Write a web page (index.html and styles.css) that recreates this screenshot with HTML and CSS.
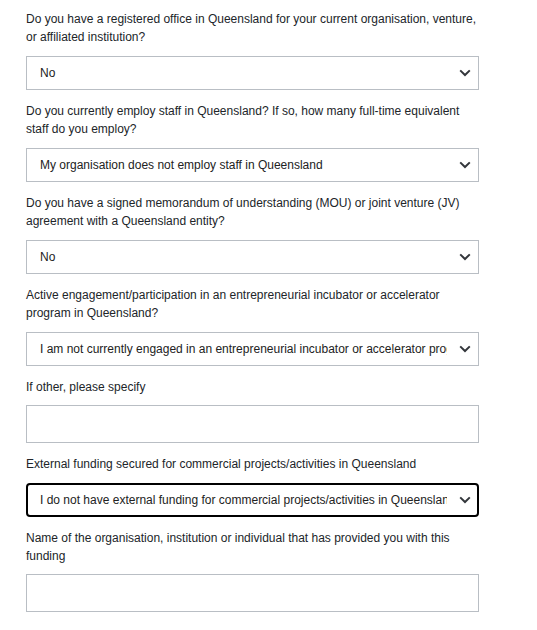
FILE: index.html
```html
<!DOCTYPE html>
<html lang="en">
<head>
<meta charset="utf-8">
<title>Form</title>
<link rel="stylesheet" href="styles.css">
</head>
<body>
<form class="form">
  <div class="field">
    <label class="label">Do you have a registered office in Queensland for your current organisation, venture, or affiliated institution?</label>
    <div class="select">
      <span class="select-text">No</span>
      <svg class="chev" width="12" height="8" viewBox="0 0 12 8"><path d="M1.2 1.4 L6 6 L10.8 1.4" fill="none" stroke="#33363b" stroke-width="2"/></svg>
    </div>
  </div>
  <div class="field">
    <label class="label">Do you currently employ staff in Queensland? If so, how many full-time equivalent staff do you employ?</label>
    <div class="select">
      <span class="select-text">My organisation does not employ staff in Queensland</span>
      <svg class="chev" width="12" height="8" viewBox="0 0 12 8"><path d="M1.2 1.4 L6 6 L10.8 1.4" fill="none" stroke="#33363b" stroke-width="2"/></svg>
    </div>
  </div>
  <div class="field">
    <label class="label">Do you have a signed memorandum of understanding (MOU) or joint venture (JV) agreement with a Queensland entity?</label>
    <div class="select">
      <span class="select-text">No</span>
      <svg class="chev" width="12" height="8" viewBox="0 0 12 8"><path d="M1.2 1.4 L6 6 L10.8 1.4" fill="none" stroke="#33363b" stroke-width="2"/></svg>
    </div>
  </div>
  <div class="field">
    <label class="label">Active engagement/participation in an entrepreneurial incubator or accelerator program in Queensland?</label>
    <div class="select">
      <span class="select-text">I am not currently engaged in an entrepreneurial incubator or accelerator program in Queensland</span>
      <svg class="chev" width="12" height="8" viewBox="0 0 12 8"><path d="M1.2 1.4 L6 6 L10.8 1.4" fill="none" stroke="#33363b" stroke-width="2"/></svg>
    </div>
  </div>
  <div class="field field-input">
    <label class="label">If other, please specify</label>
    <div class="input"></div>
  </div>
  <div class="field">
    <label class="label">External funding secured for commercial projects/activities in Queensland</label>
    <div class="select focused">
      <span class="select-text">I do not have external funding for commercial projects/activities in Queensland</span>
      <svg class="chev" width="12" height="8" viewBox="0 0 12 8"><path d="M1.2 1.4 L6 6 L10.8 1.4" fill="none" stroke="#33363b" stroke-width="2"/></svg>
    </div>
  </div>
  <div class="field field-input">
    <label class="label">Name of the organisation, institution or individual that has provided you with this funding</label>
    <div class="input"></div>
  </div>
</form>
</body>
</html>
```
FILE: styles.css
```css
html, body {
  margin: 0;
  padding: 0;
  background: #ffffff;
}
body {
  font-family: "Liberation Sans", Arial, sans-serif;
  font-size: 12px;
  color: #212529;
}
.form {
  width: 453px;
  padding: 10px 0 0 26px;
  display: flex;
  flex-direction: column;
  gap: 12px;
}
.field {
  display: flex;
  flex-direction: column;
  gap: 10px;
}
.field-input {
  gap: 9px;
}
.label {
  display: block;
  line-height: 18px;
  padding-right: 2px;
}
.select {
  box-sizing: border-box;
  height: 34px;
  border: 1px solid #b9bec4;
  display: flex;
  align-items: center;
  padding: 0 7px 0 13px;
  color: #222;
  background: #fff;
}
.select.focused {
  border: 2px solid #000;
  border-radius: 4px;
  padding-left: 12px;
  padding-right: 6px;
}
.select-text {
  flex: 1;
  min-width: 0;
  overflow: hidden;
  white-space: nowrap;
  margin-right: 12px;
}
.chev {
  flex: none;
  display: block;
}
.input {
  box-sizing: border-box;
  height: 38px;
  border: 1px solid #b9bec4;
  background: #fff;
}
```
